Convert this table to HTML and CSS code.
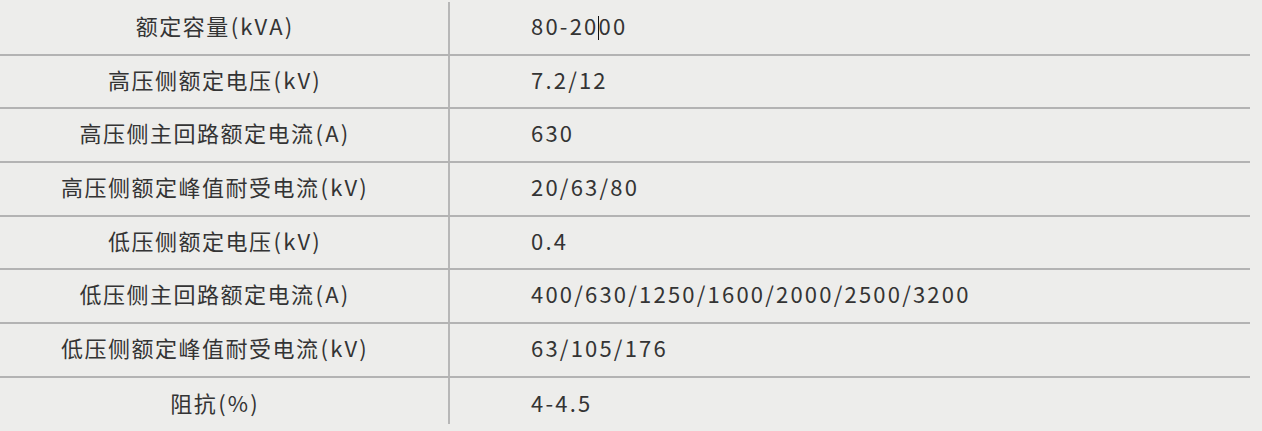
FILE: index.html
```html
<!DOCTYPE html>
<html lang="zh">
<head>
<meta charset="utf-8">
<link rel="stylesheet" href="styles.css">
</head>
<body>
<div class="spec">
  <div class="row"><div class="name">额定容量<span class="unit">(kVA)</span></div><div class="val">80-20<span class="caret"></span>00</div></div>
  <div class="row"><div class="name">高压侧额定电压<span class="unit">(kV)</span></div><div class="val">7.2/12</div></div>
  <div class="row"><div class="name">高压侧主回路额定电流<span class="unit">(A)</span></div><div class="val">630</div></div>
  <div class="row"><div class="name">高压侧额定峰值耐受电流<span class="unit">(kV)</span></div><div class="val">20/63/80</div></div>
  <div class="row"><div class="name">低压侧额定电压<span class="unit">(kV)</span></div><div class="val">0.4</div></div>
  <div class="row"><div class="name">低压侧主回路额定电流<span class="unit">(A)</span></div><div class="val">400/630/1250/1600/2000/2500/3200</div></div>
  <div class="row"><div class="name">低压侧额定峰值耐受电流<span class="unit">(kV)</span></div><div class="val">63/105/176</div></div>
  <div class="row"><div class="name">阻抗<span class="unit">(%)</span></div><div class="val">4-4.5</div></div>
</div>
</body>
</html>
```

FILE: styles.css
```css
html, body {
  margin: 0;
  padding: 0;
  background: #ededeb;
}
body {
  font-family: "Noto Sans CJK SC", "Noto Sans", sans-serif;
  color: #343434;
  font-size: 22px;
}
.spec {
  width: 1250px;
  padding-top: 2px;
  display: flex;
  flex-direction: column;
  background: linear-gradient(#b7b7b7, #b7b7b7) 448px 2px / 2px 422px no-repeat;
}
.row {
  display: flex;
  align-items: center;
  height: 53.7px;
  box-sizing: border-box;
  border-bottom: 2px solid #b3b3b3;
}
.row:last-child {
  border-bottom: none;
}
.name,
.val {
  padding-bottom: 6px;
}
.name {
  width: 430px;
  text-align: center;
  letter-spacing: 1.5px;
}
.unit {
  letter-spacing: 2.2px;
  margin-left: 1px;
}
.val {
  padding-left: 101px;
  letter-spacing: 2.2px;
}
.caret {
  display: inline-block;
  width: 1px;
  height: 24px;
  background: #111;
  vertical-align: -5px;
  margin-right: -1px;
}
```
